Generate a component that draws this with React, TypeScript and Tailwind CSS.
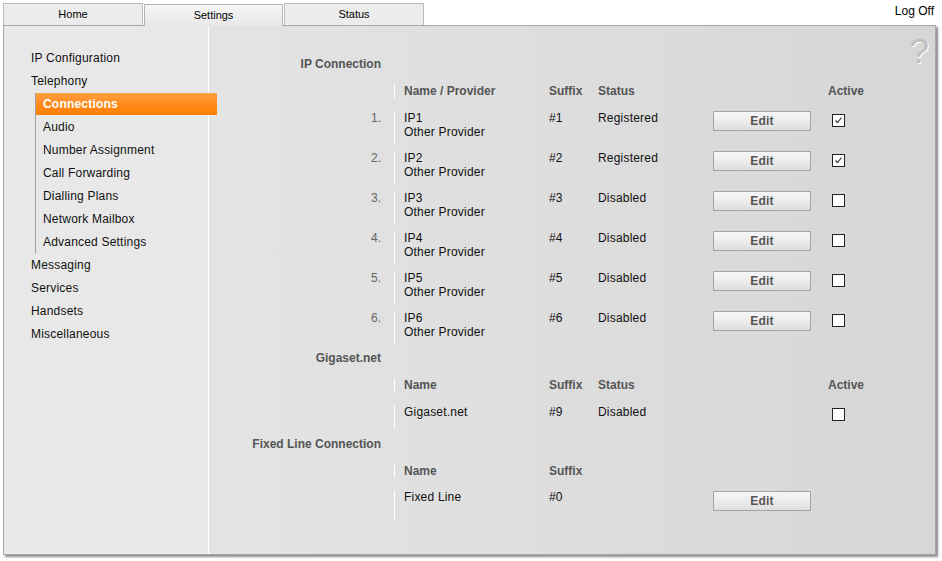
import React from 'react';

const font = { fontFamily: '"Liberation Sans", Arial, sans-serif' };

const navTop = ['IP Configuration', 'Telephony'];
const navSub = [
    'Connections',
    'Audio',
    'Number Assignment',
    'Call Forwarding',
    'Dialling Plans',
    'Network Mailbox',
    'Advanced Settings',
];
const navBottom = ['Messaging', 'Services', 'Handsets', 'Miscellaneous'];

const ipRows = [1, 2, 3, 4, 5, 6].map((n) => ({
    n,
    name: `IP${n}`,
    suffix: `#${n}`,
    status: n <= 2 ? 'Registered' : 'Disabled',
    active: n <= 2,
}));

const Tab = ({ label, active, w }: { label: string; active?: boolean; w: string }) => (
    <div
        className={
            active
                ? `relative z-10 -mb-px flex h-[22px] ${w} items-center justify-center border border-b-0 border-[#b4b4b4] bg-gradient-to-b from-[#f6f6f6] to-[#e8e8e8] text-[11px] text-black`
                : `flex h-[22px] ${w} items-center justify-center border border-b-0 border-[#bcbcbc] bg-[#ececec] text-[11px] text-black`
        }
    >
        {label}
    </div>
);

const EditButton = () => (
    <button className="h-[20px] w-[98px] border border-[#a4a4a4] bg-gradient-to-b from-[#f7f7f7] via-[#ececec] to-[#dedede] text-[12px] font-bold text-[#555]">
        Edit
    </button>
);

const Checkbox = ({ checked }: { checked?: boolean }) => (
    <div className="mt-[3px] ml-[4px] flex h-[13px] w-[13px] items-center justify-center border border-[#222] bg-white">
        {checked && (
            <svg width="9" height="9" viewBox="0 0 9 9">
                <path d="M1.5 4.5 L3.5 6.5 L7.5 1.5" fill="none" stroke="#333" strokeWidth="1.2" />
            </svg>
        )}
    </div>
);

const Heading = ({ children, className }: { children: React.ReactNode; className: string }) => (
    <div className={`flex ${className}`}>
        <div className="w-[185px] pr-[13px] text-right text-[12px] font-bold text-[#555]">{children}</div>
    </div>
);

// one table row: left label cell + right cell with white divider
const Row = ({
    className,
    label,
    children,
}: {
    className: string;
    label?: React.ReactNode;
    children: React.ReactNode;
}) => (
    <div className={`flex ${className}`}>
        <div className="w-[185px] pr-[13px] text-right text-[12px] leading-[14px] text-[#666]">{label}</div>
        <div className="flex border-l border-white pl-[9px] text-[12px] leading-[14px] tracking-[0.2px] text-[#111]">
            {children}
        </div>
    </div>
);

const HeaderCells = ({ cols }: { cols: string[] }) => (
    <>
        <div className="w-[145px] font-bold tracking-normal text-[#555]">{cols[0]}</div>
        <div className="w-[49px] font-bold tracking-normal text-[#555]">{cols[1]}</div>
        <div className="w-[115px] font-bold tracking-normal text-[#555]">{cols[2] ?? ''}</div>
        <div className="w-[115px]"></div>
        <div className="font-bold tracking-normal text-[#555]">{cols[3] ?? ''}</div>
    </>
);

export default function App() {
    return (
        <div className="h-[561px] w-[942px] overflow-hidden bg-white" style={font}>
            {/* tabs */}
            <div className="flex h-[25px] items-end pl-[3px]">
                <div className="flex items-end gap-[1px]">
                    <Tab label="Home" w="w-[140px]" />
                    <Tab label="Settings" w="w-[139px]" active />
                    <Tab label="Status" w="w-[140px]" />
                </div>
                <div className="ml-auto self-start pt-[2px] pr-[8px] text-[12px] text-black">Log Off</div>
            </div>

            {/* main panel */}
            <div className="ml-[3px] flex h-[530px] w-[933px] border border-[#a8a8a8] shadow-[2px_2px_2px_rgba(0,0,0,0.45)]">
                {/* sidebar */}
                <div className="w-[205px] shrink-0 border-r border-white bg-[#e8e8e8] pt-[21px] text-[12px] tracking-[0.2px] text-[#111]">
                    {navTop.map((t) => (
                        <div key={t} className="h-[23px] pl-[27px] leading-[23px]">
                            {t}
                        </div>
                    ))}
                    <div className="ml-[31px] border-l border-[#a0a0a0]">
                        {navSub.map((t, i) =>
                            i === 0 ? (
                                <div
                                    key={t}
                                    className="relative z-10 h-[22px] w-[181px] bg-gradient-to-b from-[#ffa040] via-[#ff8a1a] to-[#ff8000] pl-[7px] font-bold leading-[22px] text-white mb-[1px]"
                                >
                                    {t}
                                </div>
                            ) : (
                                <div key={t} className="h-[23px] pl-[7px] leading-[23px]">
                                    {t}
                                </div>
                            ),
                        )}
                    </div>
                    {navBottom.map((t) => (
                        <div key={t} className="h-[23px] pl-[27px] leading-[23px]">
                            {t}
                        </div>
                    ))}
                </div>

                {/* content */}
                <div className="relative flex-1 bg-gradient-to-r from-[#e4e4e4] to-[#d6d6d6] pt-[30px]">
                    <div className="absolute top-[7px] right-[6px] text-[35px] leading-[35px] text-[#c0c0c0] [text-shadow:1px_1px_0_#ffffff]">
                        ?
                    </div>

                    <Heading className="mb-[7px] h-[16px] items-center">IP Connection</Heading>
                    <Row className="h-[24px] items-center">
                        <HeaderCells cols={['Name / Provider', 'Suffix', 'Status', 'Active']} />
                    </Row>
                    {ipRows.map((r) => (
                        <Row key={r.n} className="h-[40px] pt-[8px]" label={`${r.n}.`}>
                            <div className="w-[145px]">
                                <div>{r.name}</div>
                                <div>Other Provider</div>
                            </div>
                            <div className="w-[49px]">{r.suffix}</div>
                            <div className="w-[115px]">{r.status}</div>
                            <div className="w-[115px]">
                                <EditButton />
                            </div>
                            <Checkbox checked={r.active} />
                        </Row>
                    ))}

                    <Heading className="h-[30px] items-center">Gigaset.net</Heading>
                    <Row className="h-[24px] items-center">
                        <HeaderCells cols={['Name', 'Suffix', 'Status', 'Active']} />
                    </Row>
                    <Row className="h-[32px] pt-[8px]">
                        <div className="w-[145px]">Gigaset.net</div>
                        <div className="w-[49px]">#9</div>
                        <div className="w-[115px]">Disabled</div>
                        <div className="w-[115px]"></div>
                        <Checkbox />
                    </Row>

                    <Heading className="h-[30px] items-center">Fixed Line Connection</Heading>
                    <Row className="h-[23px] items-center">
                        <HeaderCells cols={['Name', 'Suffix']} />
                    </Row>
                    <Row className="h-[39px] pt-[8px]">
                        <div className="w-[145px]">Fixed Line</div>
                        <div className="w-[49px]">#0</div>
                        <div className="w-[115px]"></div>
                        <div className="w-[115px] pt-[1px]">
                            <EditButton />
                        </div>
                    </Row>
                </div>
            </div>
        </div>
    );
}
